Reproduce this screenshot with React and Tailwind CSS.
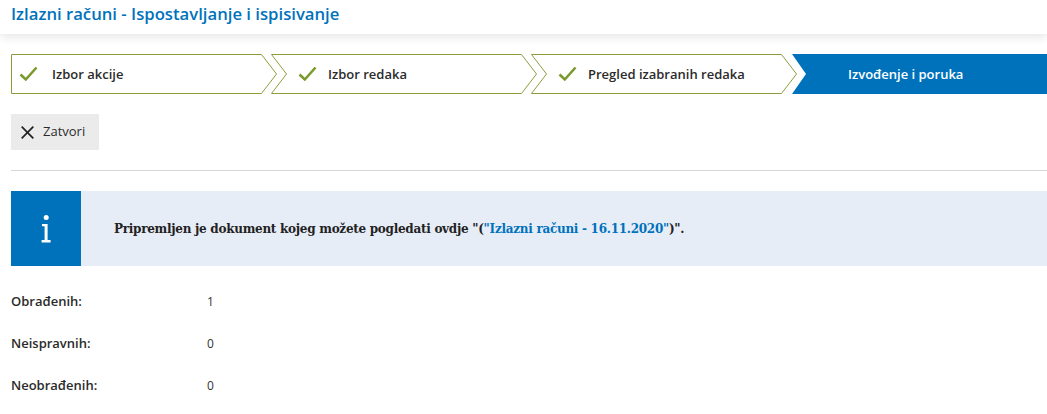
import React from 'react';

const sans = { fontFamily: '"Open Sans", sans-serif' };

const Check = () => (
  <svg className="absolute top-[12px]" width="20" height="16" viewBox="0 0 20 16" fill="none">
    <path d="M1.5 8.5 L6.8 13.5 L17.5 1.5" stroke="#7b9a2d" strokeWidth="2.6" />
  </svg>
);

const Step = ({ first, label, className }) => {
  const path = first
    ? 'M0.5 0.5 L250.5 0.5 L265.5 20 L250.5 39.5 L0.5 39.5 Z'
    : 'M0.5 0.5 L15.5 20 L0.5 39.5 L250.5 39.5 L265.5 20 L250.5 0.5 Z';
  return (
    <div className={`relative h-10 w-[266px] shrink-0 ${className}`}>
      <svg className="absolute inset-0" width="266" height="40" fill="none">
        <path d={path} stroke="#8a9f3c" strokeWidth="1" fill="#fff" />
      </svg>
      <div className={`absolute inset-y-0 ${first ? 'left-[8px]' : 'left-[27px]'}`}>
        <Check />
      </div>
      <span
        className={`absolute top-0 text-[13px] leading-10 font-[550] text-[#2b2b2b] whitespace-nowrap ${first ? 'left-[41px]' : 'left-[57px]'}`}
      >
        {label}
      </span>
    </div>
  );
};

const Row = ({ label, value }) => (
  <div className="flex h-[42px] items-center text-[13px]">
    <div className="w-[196px] font-[550] text-[#2b2b2b]">{label}</div>
    <div className="text-[12px] text-[#333]">{value}</div>
  </div>
);

export default function App() {
  return (
    <div className="h-[414px] overflow-hidden bg-white" style={sans}>
      <div className="h-[34px] pl-[11px] shadow-[0_2px_10px_rgba(0,0,0,0.12)]">
        <h1 className="text-[16.7px] leading-[27px] font-semibold text-[#0072bc]">
          Izlazni računi - Ispostavljanje i ispisivanje
        </h1>
      </div>

      <div className="pl-[11px]">
        <div className="mt-5 flex">
          <Step first label="Izbor akcije" />
          <Step label="Izbor redaka" className="-ml-1.5" />
          <Step label="Pregled izabranih redaka" className="-ml-1.5" />
          <div className="-ml-[5px] h-10 flex-1 bg-[#0072bc] pl-[56px] text-[13px] leading-10 font-semibold text-white [clip-path:polygon(0_0,100%_0,100%_100%,0_100%,14px_50%)]">
            Izvođenje i poruka
          </div>
        </div>

        <button className="mt-5 flex h-9 w-[88px] items-center gap-[9px] bg-[#ebebeb] pl-[10px] text-[13px] font-medium text-[#2b2b2b]">
          <svg width="13" height="13" viewBox="0 0 13 13" fill="none">
            <path d="M0.7 0.7 L12.3 12.3 M12.3 0.7 L0.7 12.3" stroke="#222" strokeWidth="1.7" />
          </svg>
          Zatvori
        </button>

        <div className="mt-5 border-t border-[#d6d6d6]" />

        <div className="mt-5 flex h-[75px] items-stretch bg-[#e7edf7]">
          <div className="flex w-[70px] items-center justify-center bg-[#0072bc]">
            <svg width="12" height="30" viewBox="0 0 12 30" fill="#fff">
              <circle cx="6.2" cy="3.5" r="2.5" />
              <path d="M2 10 H7.6 V26 H10.6 V28.5 H1.6 V26 H4.6 V12.3 H2 Z" />
            </svg>
          </div>
          <p
            className="ml-[33px] self-center text-[12px] font-bold tracking-[-0.28px] text-[#222] whitespace-nowrap"
            style={{ fontFamily: '"DejaVu Serif", serif' }}
          >
            Pripremljen je dokument kojeg možete pogledati ovdje "(
            <span className="text-[#0072bc]">"Izlazni računi - 16.11.2020"</span>
            )".
          </p>
        </div>

        <div className="mt-[15px]">
          <Row label="Obrađenih:" value="1" />
          <Row label="Neispravnih:" value="0" />
          <Row label="Neobrađenih:" value="0" />
        </div>
      </div>
    </div>
  );
}
